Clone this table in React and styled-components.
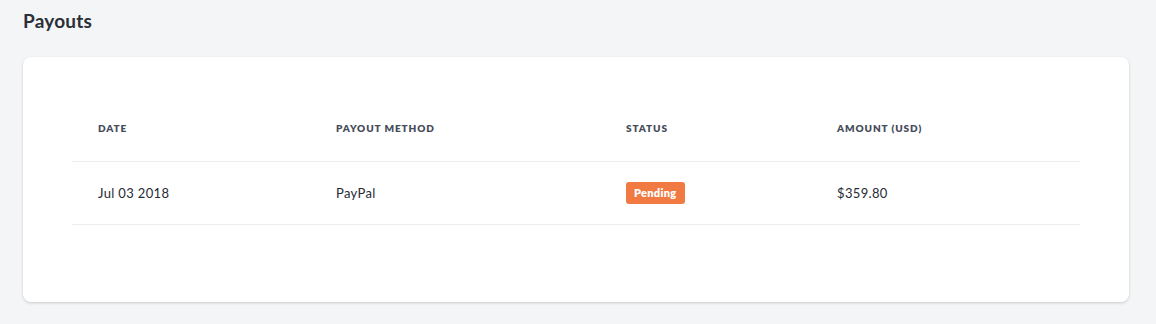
import React from "react";
import styled, { createGlobalStyle } from "styled-components";

const Global = createGlobalStyle`
  html, body { margin: 0; padding: 0; background: #f4f5f7; }
  body { font-family: "Lato", "Open Sans", sans-serif; }
`;

const Page = styled.div`
  padding: 10px 27px 22px 23px;
  box-sizing: border-box;
  width: 1156px;
`;

const Title = styled.h1`
  margin: 0;
  font-size: 19px;
  font-weight: 700;
  color: #2b2f38;
  line-height: 22px;
  letter-spacing: 0.2px;
`;

const Card = styled.section`
  margin-top: 25px;
  background: #fff;
  border-radius: 8px;
  box-shadow: 0 1px 3px rgba(0, 0, 0, 0.18);
  padding: 45px 49px 77px 49px;
  height: 245px;
  box-sizing: border-box;
`;

const Table = styled.table`
  width: 1008px;
  border-collapse: collapse;
  table-layout: fixed;
`;

const Col = styled.col`
  width: ${(p) => p.$w}px;
`;

const Th = styled.th`
  text-align: left;
  font-size: 10px;
  font-weight: 800;
  color: #464c5a;
  letter-spacing: 0.9px;
  text-transform: uppercase;
  padding: 0 0 7px 26px;
  height: 52px;
  border-bottom: 1px solid #ececee;
`;

const Td = styled.td`
  font-size: 13px;
  color: #262a33;
  padding: 0 0 0 26px;
  height: 62px;
  border-bottom: 1px solid #ececee;
  letter-spacing: 0.35px;
`;

const Badge = styled.span`
  display: inline-block;
  background: #f07a42;
  color: #fff;
  font-size: 11px;
  font-weight: 800;
  border-radius: 3px;
  padding: 0 8px;
  height: 22px;
  line-height: 22px;
  letter-spacing: 0.3px;
`;

const columns = [
  { label: "Date", w: 238 },
  { label: "Payout Method", w: 290 },
  { label: "Status", w: 211 },
  { label: "Amount (USD)", w: 269 },
];

const rows = [{ date: "Jul 03 2018", method: "PayPal", status: "Pending", amount: "$359.80" }];

export default function App() {
  return (
    <>
      <Global />
      <Page>
        <Title>Payouts</Title>
        <Card>
          <Table>
            <colgroup>
              {columns.map((c) => (
                <Col key={c.label} $w={c.w} />
              ))}
            </colgroup>
            <thead>
              <tr>
                {columns.map((c) => (
                  <Th key={c.label}>{c.label}</Th>
                ))}
              </tr>
            </thead>
            <tbody>
              {rows.map((r) => (
                <tr key={r.date}>
                  <Td>{r.date}</Td>
                  <Td>{r.method}</Td>
                  <Td>
                    <Badge>{r.status}</Badge>
                  </Td>
                  <Td>{r.amount}</Td>
                </tr>
              ))}
            </tbody>
          </Table>
        </Card>
      </Page>
    </>
  );
}
